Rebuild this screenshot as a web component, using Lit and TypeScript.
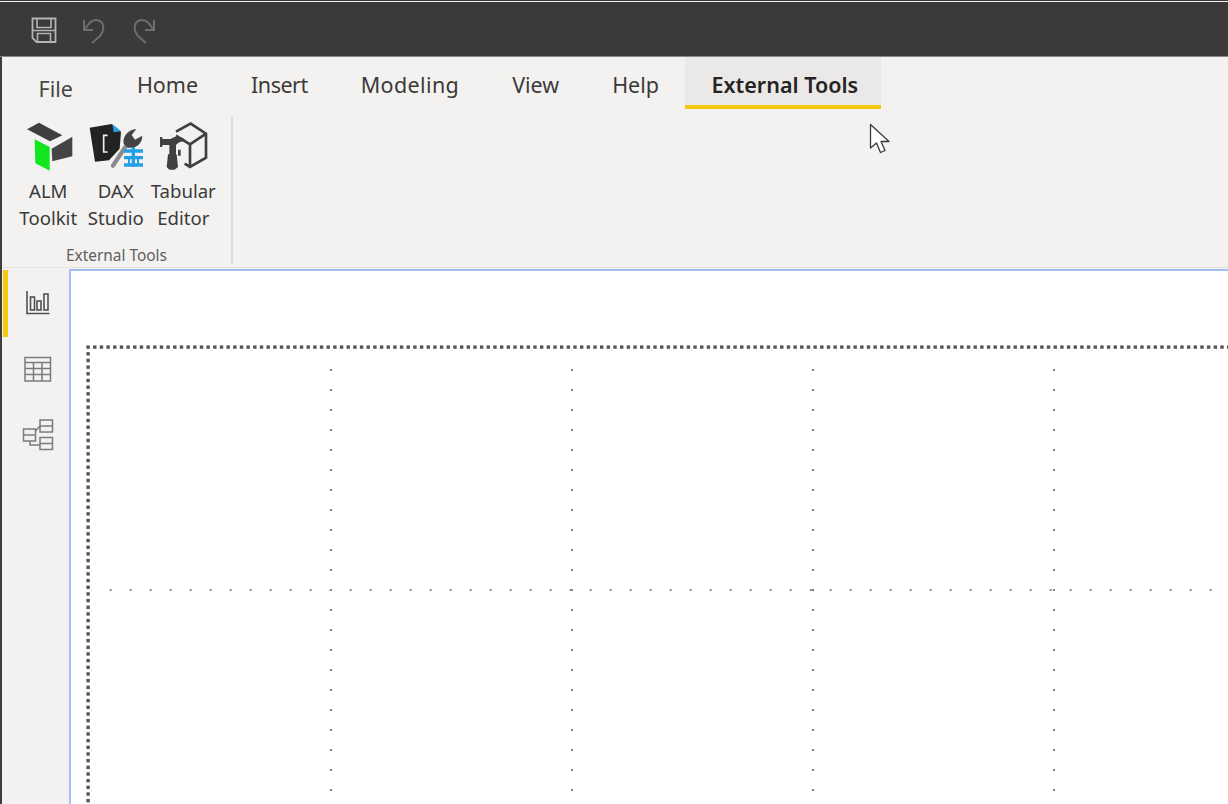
import { LitElement, html, css, svg } from "lit";
import { customElement } from "lit/decorators.js";
import { classMap } from "lit/directives/class-map.js";

const tabs = ["Home", "Insert", "Modeling", "View", "Help"];

const almIcon = html`<svg class="tool-icon" viewBox="0 0 198 180">
  <polygon points="36,37 72,17 142,55 105,73" fill="#3f3f3f"/>
  <polygon points="59,67 104,90 104,161 61,139" fill="#12e61e"/>
  <polygon points="110,95 172,59 172,118 112,133" fill="#454545"/>
</svg>`;

const daxIcon = html`<svg class="tool-icon" viewBox="0 0 198 180">
  <polygon points="20,32 86,21 114,45 110,95 78,130 36,134" fill="#222"/>
  <polygon points="88,21 114,43 92,46" fill="#2a9fe0"/>
  <path d="M74,55H62V105H74" fill="none" stroke="#eee" stroke-width="5"/>
  <path d="M90,146L132,82" stroke="#f3f2f1" stroke-width="20"/>
  <path d="M90,146L132,82" stroke="#8a8a8a" stroke-width="13" stroke-linecap="round"/>
  <path d="M122,80C118,58 136,38 160,36L146,54L156,68L178,56C178,80 158,96 134,92Z" fill="#444"/>
  <path d="M123,102H180M123,122H180M123,144H180M151,90V150" stroke="#22a0e6" stroke-width="10" fill="none"/>
  <path d="M138,122V144M165,122V144" stroke="#22a0e6" stroke-width="6" fill="none"/>
</svg>`;

const tabularIcon = html`<svg class="tool-icon" viewBox="0 0 198 180">
  <path d="M78,44L122,20L168,50V122L120,150L104,140M78,56L120,82L168,50M120,82V150M88,98V116" fill="none" stroke="#3f3f3f" stroke-width="8"/>
  <path d="M30,60H36L38,66H62C76,56 98,56 112,76C96,70 84,76 78,84V112H80L84,150L74,158H58L50,150L54,112H58V84H38L36,90H30Z" fill="#404040"/>
</svg>`;

@customElement("app-root")
export class AppRoot extends LitElement {
  static styles = css`
    :host {
      display: block;
      width: 1228px;
      height: 804px;
      overflow: hidden;
      position: relative;
      font-family: "Noto Sans", "Open Sans", sans-serif;
      color: #323130;
      background: #f3f2f1;
    }
    .app { display: flex; flex-direction: column; height: 804px; border-left: 2px solid #3f3e3d; box-sizing: border-box; }
    .title {
      height: 57px; flex: none; background: #3b3a39;
      border-top: 1px solid #3b3a39; box-shadow: inset 0 1px 0 #f0f0f0, inset 0 -1px 0 #8a8988;
      box-sizing: border-box;
      display: flex; align-items: center; padding-left: 28px; gap: 24px;
      margin-left: -2px; padding-top: 1px;
    }
    .title svg { display: block; width: 28px; height: 28px; flex: none; }
    .title .save { margin-left: 2px; }
    .title .undo { margin-left: -2px; }
    .title .redo { margin-left: -2px; transform: scaleX(-1); }
    .tabs { display: flex; height: 52px; flex: none; align-items: flex-start; }
    .tab {
      font-size: 21.5px; padding: 0 26.5px; height: 48px; line-height: 55px;
      border-bottom: 4px solid transparent; white-space: nowrap;
      color: #3b3a39;
    }
    .tab.file { height: 44px; padding: 4px 37.5px 0 36.5px; color: #484644; }
    .tab.Insert { letter-spacing: -0.5px; }
    .tab.Modeling { letter-spacing: 0.37px; }
    .tab.active {
      font-weight: 600; color: #252423; background: #ebe9e8;
      border-bottom-color: #f2c811; padding: 0 23px 0 27px; margin-left: -1px;
    }
    .ribbon { height: 158px; flex: none; display: flex; box-shadow: 0 1px 0 #e4e3e2; position: relative; }
    .group { width: 229px; height: 147px; margin-top: 8px; border-right: 2px solid #dddcdb; display: flex; flex-direction: column; }
    .tools { display: flex; padding-left: 12.5px; height: 130px; flex: none; }
    .tool { width: 67.5px; display: flex; flex-direction: column; align-items: center; font-size: 18.6px; line-height: 26.5px; text-align: center; color: #3b3a39; white-space: nowrap; }
    .tool-icon { width: 66px; height: 60px; display: block; flex: none; margin-bottom: 1px; }
    .group-label { font-size: 15.4px; line-height: 17px; text-align: center; color: #605e5c; }
    .main { flex: 1; display: flex; min-height: 0; padding-top: 2px; }
    .rail { width: 67px; flex: none; display: flex; flex-direction: column; padding-top: 1px; }
    .rail-item { height: 66px; flex: none; display: flex; align-items: center; justify-content: center; border-left: 5px solid transparent; margin-left: 1px; box-sizing: border-box; padding-right: 1px; }
    .rail-item.on { border-left-color: #f2c811; height: 67px; padding-bottom: 1px; }
    .rail-item.table { height: 64px; }
    .rail-item.model { height: 67px; }
    .rail-item svg { width: 32px; height: 32px; display: block; }
    .canvas { flex: 1; min-width: 0; background: #fff; border-left: 2px solid #a3c0f2; border-top: 2px solid #a3c0f2; padding: 74px 0 0 15px; overflow: hidden; }
    .canvas svg { display: block; }
    .cursor { position: absolute; left: 869px; top: 123px; width: 22px; height: 31px; }
  `;

  private page() {
    const W = 1142, H = 460;
    const parts = [];
    // faint secondary snap marks just inside the page edge
    for (let x = 24.7; x < W; x += 20) parts.push(svg`<rect x=${x - 1} y="5" width="3" height="1" fill="#ececec"/>`);
    for (let y = 25; y < H; y += 20) parts.push(svg`<rect x="5" y=${y - 1} width="1" height="3" fill="#ececec"/>`);
    // page edge dots (page starts at x=86, y=345)
    for (let x = 0.4; x < W; x += 6.67) parts.push(svg`<rect x=${x} y="0.4" width="3.4" height="3.4" fill="#555"/>`);
    for (let y = 7.1; y < H; y += 6.67) parts.push(svg`<rect x="0.4" y=${y} width="3.4" height="3.4" fill="#555"/>`);
    // snap grid
    for (const gx of [245, 486, 727, 968]) {
      for (let y = 25; y < H; y += 20) parts.push(svg`<rect x=${gx - 1} y=${y - 1} width="2" height="2" fill="#808080"/>`);
    }
    for (let x = 24.7; x < W; x += 20) parts.push(svg`<rect x=${x - 1} y="244" width="2" height="2" fill="#8c8c8c"/>`);
    return svg`${parts}`;
  }

  render() {
    return html`
      <div class="app">
        <div class="title">
          <svg class="save" viewBox="0 0 28 28" fill="none" stroke="#b4b4b4" stroke-width="1.8">
            <path d="M2.5,2.5H25.5V26H6.5L2.5,22Z"/>
            <path d="M7,2.5V11.5H21V2.5M7.5,26V17.5H20.5V26M2.5,14.5H25.5" stroke-width="1.6"/>
          </svg>
          <svg class="undo" viewBox="0 0 28 28" fill="none" stroke="#6e6e6d" stroke-width="2">
            <path d="M4,4V14H13M4.5,13.5L10,6.5C14,3 21,3 23,9C24.5,14 22,17 20,20L12,27"/>
          </svg>
          <svg class="redo" viewBox="0 0 28 28" fill="none" stroke="#6e6e6d" stroke-width="2">
            <path d="M4,4V14H13M4.5,13.5L10,6.5C14,3 21,3 23,9C24.5,14 22,17 20,20L12,27"/>
          </svg>
        </div>
        <div class="tabs">
          <div class="tab file">File</div>
          ${tabs.map((t) => html`<div class=${classMap({ tab: true, [t]: true })}>${t}</div>`)}
          <div class="tab active">External Tools</div>
        </div>
        <div class="ribbon">
          <div class="group">
            <div class="tools">
              <div class="tool">${almIcon}<span>ALM</span><span>Toolkit</span></div>
              <div class="tool">${daxIcon}<span>DAX</span><span>Studio</span></div>
              <div class="tool">${tabularIcon}<span>Tabular</span><span>Editor</span></div>
            </div>
            <div class="group-label">External Tools</div>
          </div>
        </div>
        <div class="main">
          <div class="rail">
            <div class="rail-item on">
              <svg viewBox="0 0 32 32" fill="none" stroke="#505050" stroke-width="1.6">
                <path d="M5,4V26.5H27.5"/>
                <rect x="8.5" y="10" width="4" height="13"/>
                <rect x="15" y="14" width="4" height="9"/>
                <rect x="22" y="7" width="4" height="16"/>
              </svg>
            </div>
            <div class="rail-item table">
              <svg viewBox="0 0 32 32" fill="none" stroke="#7b7b7b" stroke-width="1.5">
                <rect x="3" y="4.5" width="25.5" height="23.5"/>
                <path d="M3,9.5H28.5M3,15.5H28.5M3,21.5H28.5M11.5,9.5V28M20,9.5V28"/>
              </svg>
            </div>
            <div class="rail-item model">
              <svg viewBox="0 0 32 32" fill="none" stroke="#7b7b7b" stroke-width="1.5">
                <rect x="1.5" y="10" width="12" height="12"/>
                <path d="M1.5,16H13.5"/>
                <rect x="18" y="1" width="12.5" height="12"/>
                <path d="M18,7H30.5"/>
                <rect x="18" y="18.5" width="12.5" height="12"/>
                <path d="M18,24.5H30.5M13.5,12L18,7M8,22V26H18"/>
              </svg>
            </div>
          </div>
          <div class="canvas">
            <svg width="1142" height="460" viewBox="0 0 1142 460">${this.page()}</svg>
          </div>
        </div>
      </div>
      <svg class="cursor" viewBox="0 0 22 31">
        <path d="M1.5,1.5V25L7.5,20L11.5,29.5L16,27.5L12,18.5H20Z" fill="#fff" stroke="#3a3a3a" stroke-width="1.3" stroke-linejoin="round"/>
      </svg>
    `;
  }
}
